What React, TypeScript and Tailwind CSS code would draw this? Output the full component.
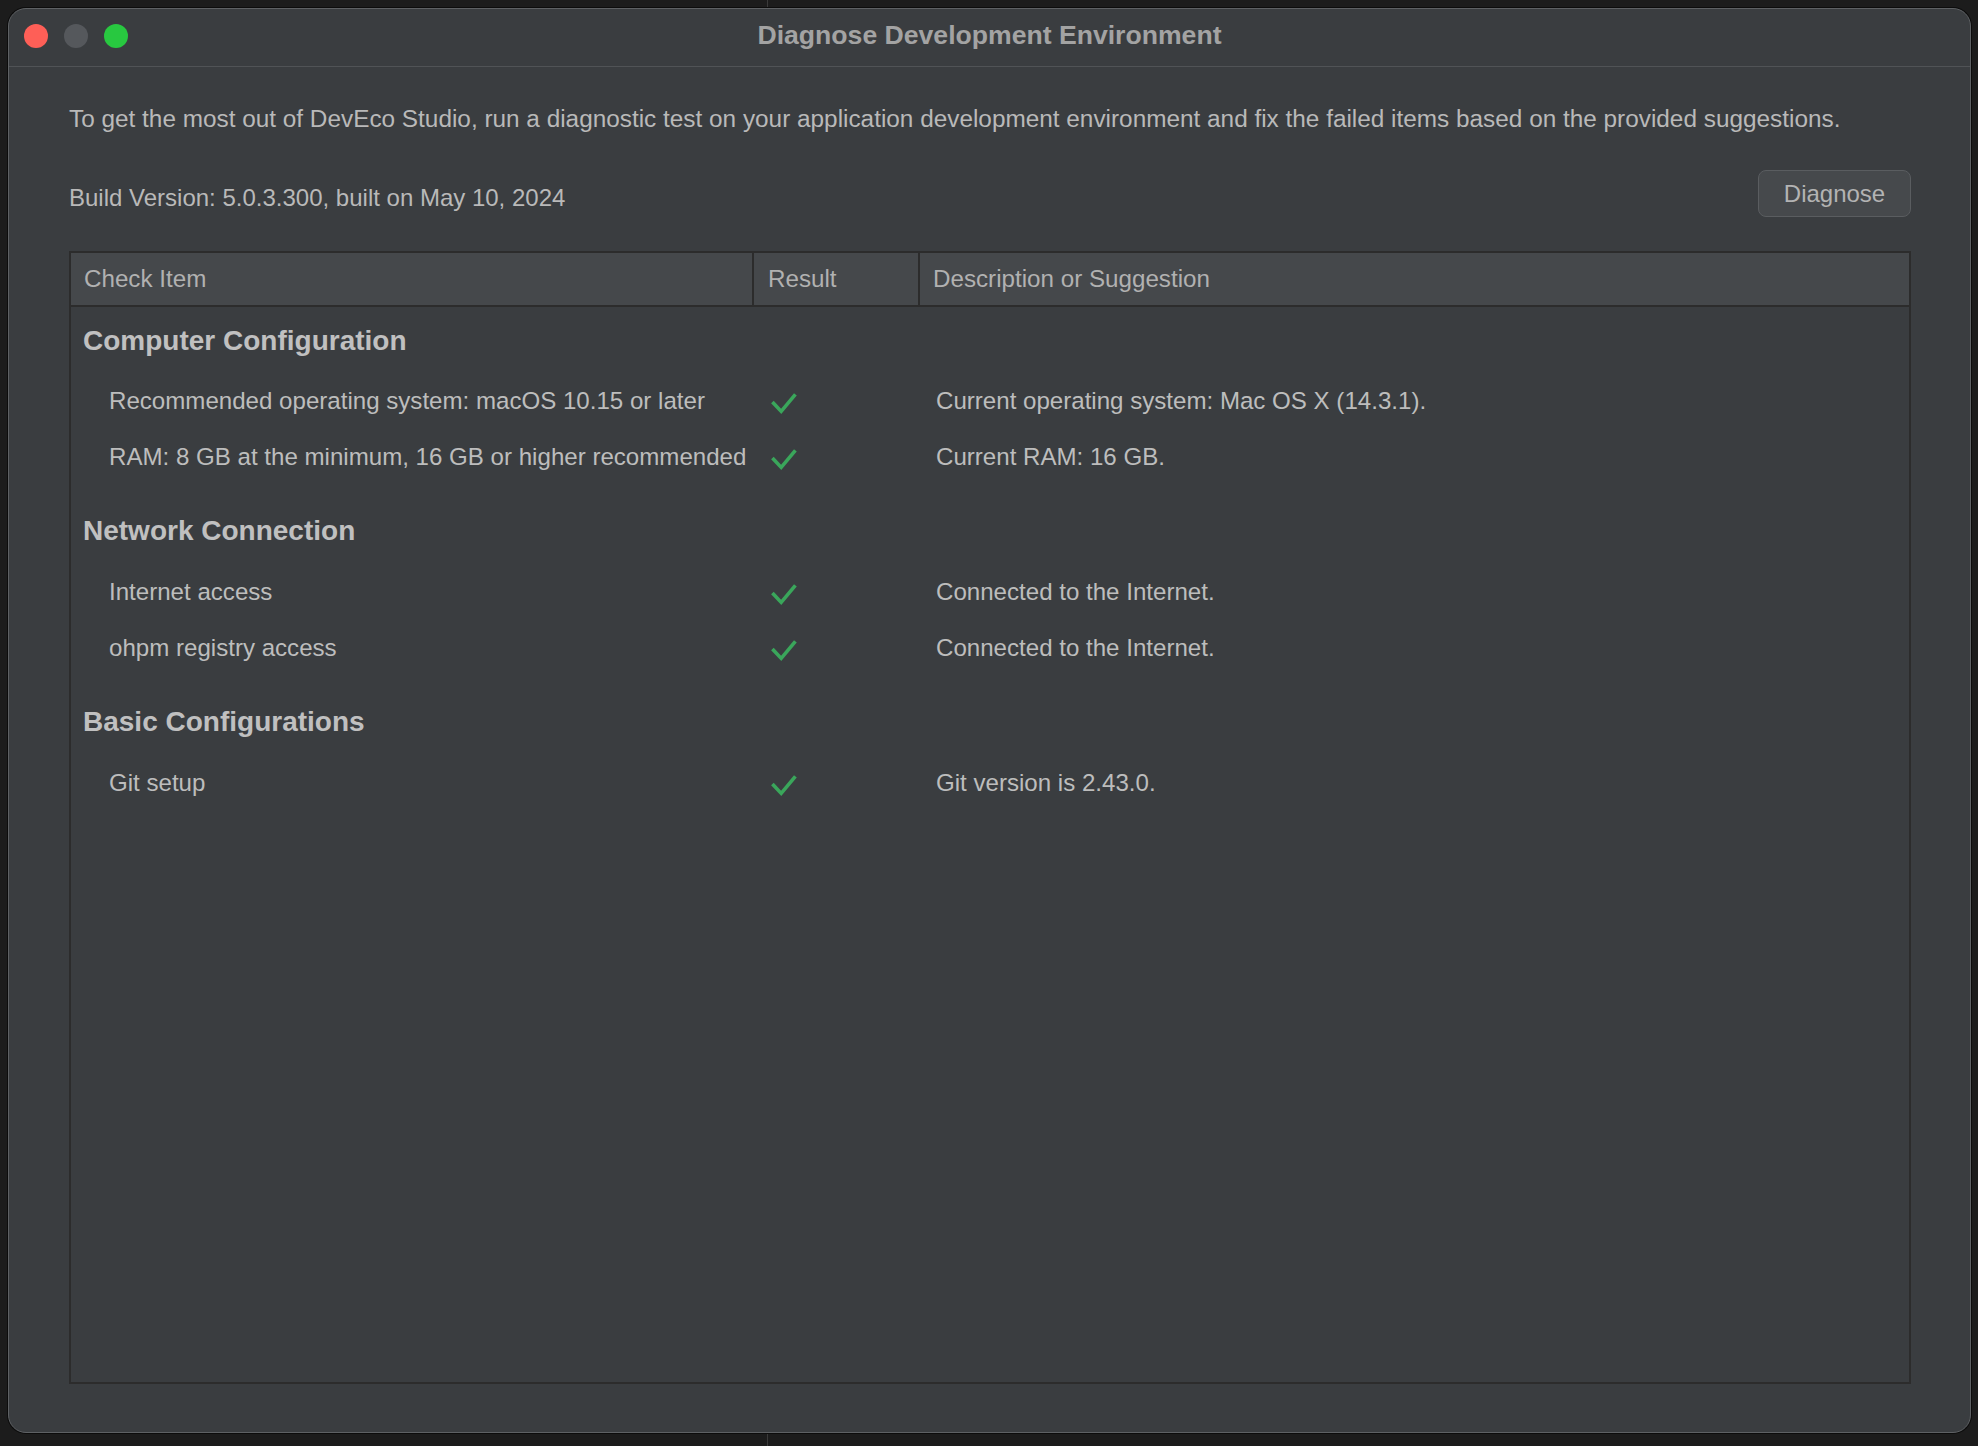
import React from "react";

const Check = () => (
  <svg width="26" height="22" viewBox="0 0 26 22" className="relative top-[3px]">
    <path d="M1.4 9.0 L10.2 18.4 L24.4 1.4" fill="none" stroke="#3aa65b" strokeWidth="3.6" strokeLinecap="butt" strokeLinejoin="miter" />
  </svg>
);

type Item = { label: string; desc: string };
type Section = { title: string; items: Item[] };

const sections: Section[] = [
  {
    title: "Computer Configuration",
    items: [
      { label: "Recommended operating system: macOS 10.15 or later", desc: "Current operating system: Mac OS X (14.3.1)." },
      { label: "RAM: 8 GB at the minimum, 16 GB or higher recommended", desc: "Current RAM: 16 GB." },
    ],
  },
  {
    title: "Network Connection",
    items: [
      { label: "Internet access", desc: "Connected to the Internet." },
      { label: "ohpm registry access", desc: "Connected to the Internet." },
    ],
  },
  {
    title: "Basic Configurations",
    items: [{ label: "Git setup", desc: "Git version is 2.43.0." }],
  },
];

export default function App() {
  return (
    <div
      className="relative w-[1978px] h-[1446px] bg-[#1c1c1c] overflow-hidden"
      style={{ fontFamily: '"Liberation Sans", Arial, Helvetica, sans-serif' }}
    >
      <div className="absolute left-[767px] top-0 w-px h-full bg-[#3a3a3a]" />
      <div className="relative pt-[8px] pl-[8px]">
        <div className="w-[1963px] h-[1425px] rounded-[18px] border border-[#5e6164] bg-[#3a3d40] shadow-[0_0_0_1px_#0c0c0c] flex flex-col overflow-hidden">
          {/* Title bar */}
          <div className="relative h-[58px] shrink-0 border-b border-[#505356] flex items-start pt-[15px] pl-[15px] gap-[16px]">
            <div className="w-[24px] h-[24px] rounded-full bg-[#fe5f57]" />
            <div className="w-[24px] h-[24px] rounded-full bg-[#55585c]" />
            <div className="w-[24px] h-[24px] rounded-full bg-[#28c840]" />
            <div className="absolute inset-x-0 top-[11px] flex justify-center pointer-events-none">
              <span className="text-[26.6px] leading-[30px] font-bold text-[#a3a3a3]">
                Diagnose Development Environment
              </span>
            </div>
          </div>

          {/* Body */}
          <div className="flex-1 flex flex-col pl-[60px] pr-[59px] pt-[38px] pb-[48px] min-h-0">
            <div className="text-[24.35px] leading-[28px] text-[#b9b9b9] whitespace-nowrap">
              To get the most out of DevEco Studio, run a diagnostic test on your application development environment and fix the failed items based on the provided suggestions.
            </div>
            <div className="mt-[37px] flex justify-between items-start">
              <div className="pt-[14px] text-[24px] leading-[28px] text-[#b9b9b9]">
                Build Version: 5.0.3.300, built on May 10, 2024
              </div>
              <button className="w-[153px] h-[47px] rounded-[8px] border border-[#5a5d60] bg-[#46494c] text-[24px] text-[#b3b3b3] flex items-center justify-center">
                Diagnose
              </button>
            </div>

            {/* Table */}
            <div className="mt-[34px] flex-1 border-2 border-[#2c2c2c] flex flex-col min-h-0">
              <div className="grid grid-cols-[683px_166px_1fr] h-[54px] bg-[#45484b] border-b-2 border-[#2c2c2c] text-[24.2px] leading-[28px] text-[#b1b1b1]">
                <div className="border-r-2 border-[#2c2c2c] pl-[13px] flex items-center">Check Item</div>
                <div className="border-r-2 border-[#2c2c2c] pl-[14px] flex items-center">Result</div>
                <div className="pl-[13px] flex items-center">Description or Suggestion</div>
              </div>
              <div className="flex-1 flex flex-col">
                {sections.map((s, si) => (
                  <div key={s.title} className="flex flex-col">
                    <div
                      className={
                        si === 0
                          ? "h-[66px] pt-[17px] pl-[12px] text-[28px] leading-[33px] font-bold text-[#c0c0c0] whitespace-nowrap"
                          : "h-[79px] pt-[29px] pl-[12px] text-[28px] leading-[33px] font-bold text-[#c0c0c0] whitespace-nowrap"
                      }
                    >
                      {s.title}
                    </div>
                    {s.items.map((it) => (
                      <div key={it.label} className="grid grid-cols-[683px_166px_1fr] h-[56px] text-[24.1px] leading-[28px] text-[#bdbdbd]">
                        <div className="pl-[38px] flex items-center whitespace-nowrap">{it.label}</div>
                        <div className="pl-[17px] flex items-center">
                          <Check />
                        </div>
                        <div className="pl-[16px] flex items-center whitespace-nowrap">{it.desc}</div>
                      </div>
                    ))}
                  </div>
                ))}
              </div>
            </div>
          </div>
        </div>
      </div>
    </div>
  );
}
